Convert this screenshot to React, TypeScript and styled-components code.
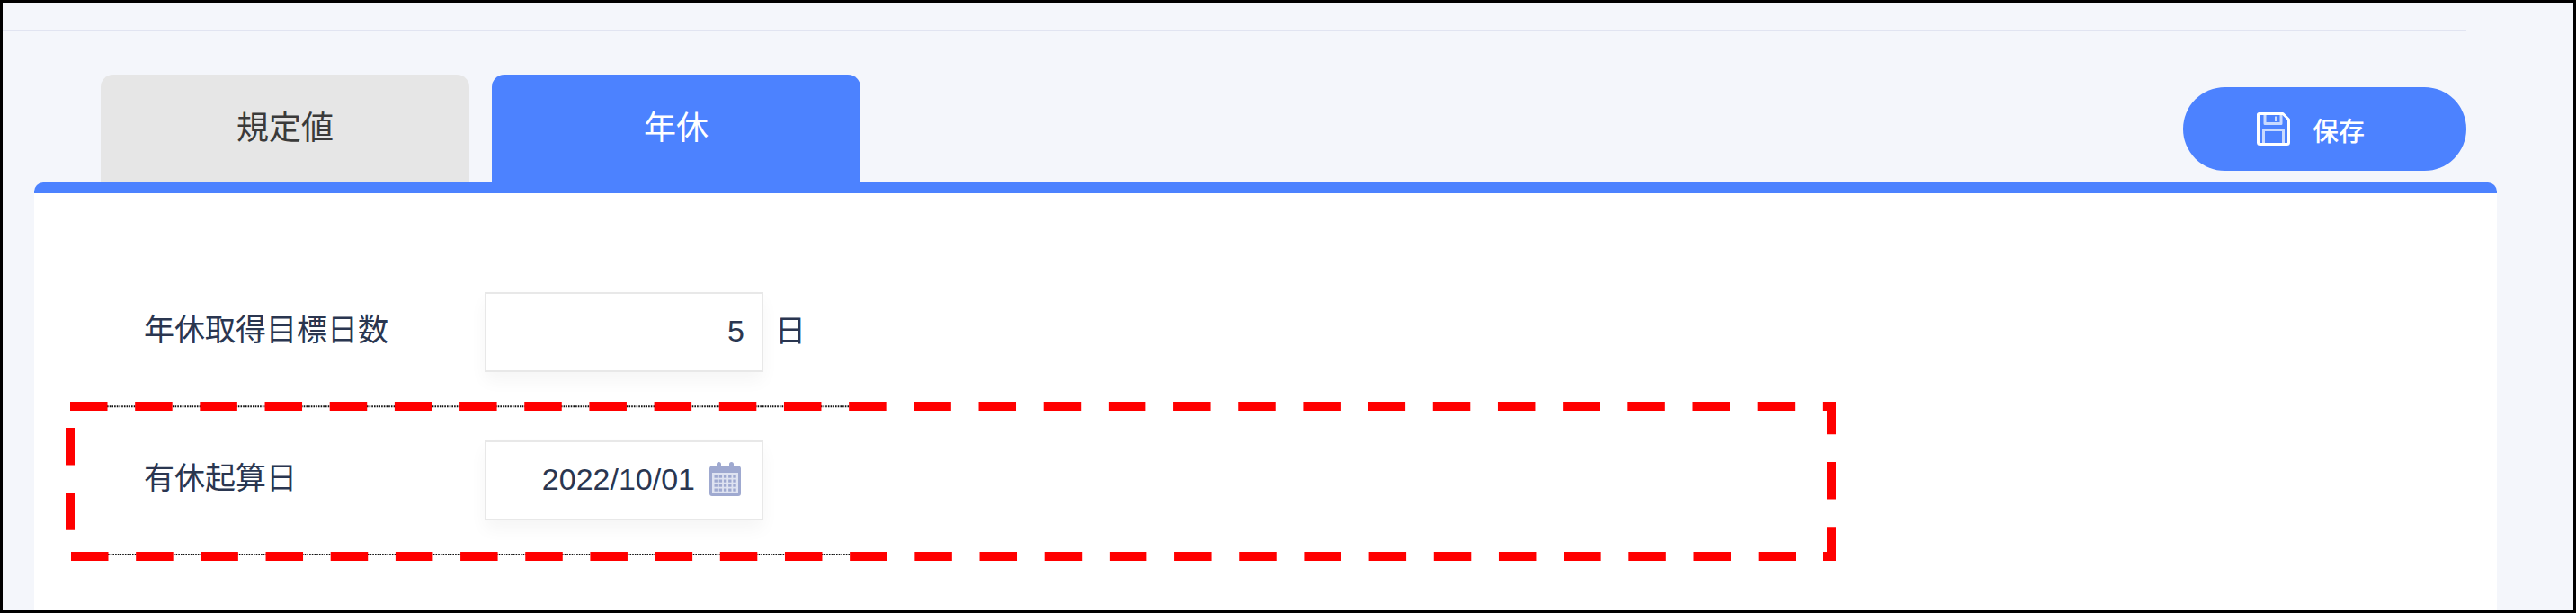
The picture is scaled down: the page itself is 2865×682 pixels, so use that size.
import React from "react";
import styled, { createGlobalStyle } from "styled-components";

const GlobalStyle = createGlobalStyle`
    html, body {
        margin: 0;
        padding: 0;
        background: #ffffff;
    }
`

const SaveIcon = () => (
    <svg width="37" height="37" viewBox="0 0 37 37" fill="none" stroke="#ffffff" strokeWidth="3" strokeLinejoin="round">
        <path d="M2.5 1.5H29L35.5 8V33.5A2 2 0 0 1 33.5 35.5H3.5A2 2 0 0 1 1.5 33.5V2.5A1 1 0 0 1 2.5 1.5Z" />
        <path opacity="0.7" d="M9 2V12.5H27V2" />
        <path opacity="0.7" d="M21.5 4.5V10" />
        <path opacity="0.7" d="M7.5 35V19.5H29.5V35" />
    </svg>
)

const CalendarIcon = () => (
    <svg width="35" height="38" viewBox="0 0 35 38">
        <path fill="#9fa9d0" d="M3 4.5H8V2.5A2.5 2.5 0 0 1 13 2.5V4.5H22V2.5A2.5 2.5 0 0 1 27 2.5V4.5H32A3 3 0 0 1 35 7.5V35A3 3 0 0 1 32 38H3A3 3 0 0 1 0 35V7.5A3 3 0 0 1 3 4.5Z" />
        <rect x="3" y="12" width="29" height="23" fill="#dfe3f1" />
        {[0, 1, 2, 3].map(row =>
            [0, 1, 2, 3, 4].map(col => (
                <rect key={`${row}-${col}`} x={5.5 + col * 5.2} y={14.5 + row * 5} width="3.4" height="3.2" fill="#9fa9d0" />
            ))
        )}
    </svg>
)

const App = () => {
    return (
        <StyledFrame>
            <GlobalStyle />
            <StyledDivider />
            <StyledHeader>
                <StyledTab $active={false}>規定値</StyledTab>
                <StyledTab $active={true}>年休</StyledTab>
                <StyledSaveButton>
                    <SaveIcon />
                    保存
                </StyledSaveButton>
            </StyledHeader>
            <StyledCard>
                <StyledRow>
                    <StyledLabel>年休取得目標日数</StyledLabel>
                    <StyledField>5</StyledField>
                    <StyledUnit>日</StyledUnit>
                </StyledRow>
                <StyledRow>
                    <StyledLabel>有休起算日</StyledLabel>
                    <StyledField $gap={16} $right={23}>
                        <span>2022/10/01</span>
                        <CalendarIcon />
                    </StyledField>
                </StyledRow>
            </StyledCard>
            <StyledMark viewBox="0 0 2865 682" fill="none">
                <g stroke="#111111" strokeWidth="2" strokeDasharray="1.6 1.1">
                    <path d="M119 452.3H944" />
                    <path d="M120 617H945" />
                </g>
                <g stroke="#ff0000" strokeWidth="10" strokeDasharray="41.5 30.68">
                    <path d="M78 452H2042" />
                    <path d="M79 619H2042" />
                    <path d="M78 476V590" />
                    <path d="M2037 447V624" strokeDashoffset="5.2" />
                </g>
            </StyledMark>
        </StyledFrame>
    )
}

export default App


const StyledFrame = styled.div`
    position: relative;
    box-sizing: border-box;
    display: flex;
    flex-direction: column;
    width: 2865px;
    height: 682px;
    overflow: hidden;
    border: 3px solid #000000;
    background: #f4f6fb;
    font-family: "Noto Sans CJK JP", "Liberation Sans", sans-serif;
`

const StyledDivider = styled.div`
    width: 2740px;
    height: 2px;
    margin-top: 30px;
    background: #e1e4f1;
`

const StyledHeader = styled.div`
    display: flex;
    align-items: flex-start;
    column-gap: 25px;
    height: 120px;
    margin-top: 48px;
    padding: 0 119px 0 109px;
`

const StyledTab = styled.div<{ $active: boolean }>`
    display: flex;
    justify-content: center;
    align-items: center;
    width: 410px;
    height: 120px;
    padding-bottom: 8px;
    box-sizing: border-box;
    border-radius: 14px 14px 0 0;
    font-size: 36px;
    color: ${props => props.$active ? "#ffffff" : "#3a3a3a"};
    background: ${props => props.$active ? "#4c82ff" : "#e6e6e6"};
`

const StyledSaveButton = styled.div`
    display: flex;
    align-items: center;
    column-gap: 25px;
    box-sizing: border-box;
    width: 315px;
    height: 93px;
    margin-top: 14px;
    margin-left: auto;
    padding-left: 82px;
    border-radius: 47px;
    font-size: 29px;
    font-weight: 500;
    color: #ffffff;
    background: #4c82ff;
`

const StyledCard = styled.div`
    flex: 1;
    display: flex;
    flex-direction: column;
    row-gap: 76px;
    width: 2739px;
    box-sizing: border-box;
    margin-left: 35px;
    padding: 110px 0 0 122px;
    border-top: 12px solid #4c82ff;
    border-radius: 10px 10px 0 0;
    background: #ffffff;
`

const StyledRow = styled.div`
    display: flex;
    align-items: center;
    height: 89px;
    color: #2a3650;
    font-size: 34px;
`

const StyledLabel = styled.div`
    width: 379px;
    padding-bottom: 11px;
`

const StyledField = styled.div<{ $gap?: number, $right?: number }>`
    display: flex;
    justify-content: flex-end;
    align-items: center;
    column-gap: ${props => props.$gap ?? 0}px;
    box-sizing: border-box;
    width: 310px;
    height: 89px;
    padding-right: ${props => props.$right ?? 19}px;
    padding-bottom: 3px;
    border: 2px solid #e8e8e8;
    background: #ffffff;
    box-shadow: 0 10px 18px rgba(0, 0, 0, 0.04);
    font-family: "Liberation Sans", sans-serif;
    font-size: 34px;
`

const StyledUnit = styled.div`
    margin-left: 13px;
    padding-bottom: 9px;
`

const StyledMark = styled.svg`
    position: absolute;
    top: -3px;
    left: -3px;
    width: 2865px;
    height: 682px;
    pointer-events: none;
`
